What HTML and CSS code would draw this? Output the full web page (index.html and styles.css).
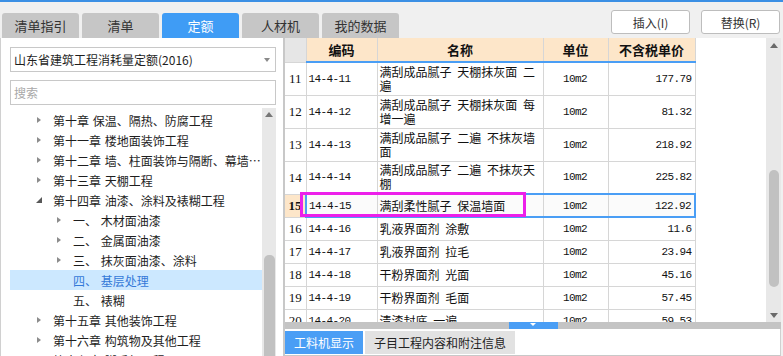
FILE: index.html
```html
<!DOCTYPE html>
<html lang="zh-CN">
<head>
    <meta charset="UTF-8">
    <meta name="viewport" content="width=device-width, initial-scale=1.0">
    <title>定额</title>
    <link rel="stylesheet" href="styles.css">
</head>
<body>
    <div class="topline"></div>

    <div class="toolbar">
        <div class="tabs">
            <a class="tab">清单指引</a>
            <a class="tab">清单</a>
            <a class="tab active">定额</a>
            <a class="tab">人材机</a>
            <a class="tab">我的数据</a>
        </div>
        <div class="actions">
            <button class="btn">插入(I)</button>
            <button class="btn">替换(R)</button>
        </div>
    </div>

    <div class="main">
        <div class="left">
            <div class="select">
                <span>山东省建筑工程消耗量定额(2016)</span>
                <span class="caret"></span>
            </div>
            <input class="search" type="text" placeholder="搜索">

            <div class="tree-wrap">
                <ul class="tree">
                    <li class="node"><span class="arrow"></span><span class="label">第十章 保温、隔热、防腐工程</span></li>
                    <li class="node"><span class="arrow"></span><span class="label">第十一章 楼地面装饰工程</span></li>
                    <li class="node"><span class="arrow"></span><span class="label">第十二章 墙、柱面装饰与隔断、幕墙工程</span></li>
                    <li class="node"><span class="arrow"></span><span class="label">第十三章 天棚工程</span></li>
                    <li class="node open"><span class="arrow"></span><span class="label">第十四章 油漆、涂料及裱糊工程</span></li>
                    <li class="node sub"><span class="arrow"></span><span class="label">一、 木材面油漆</span></li>
                    <li class="node sub"><span class="arrow"></span><span class="label">二、 金属面油漆</span></li>
                    <li class="node sub"><span class="arrow"></span><span class="label">三、 抹灰面油漆、涂料</span></li>
                    <li class="node sub leaf on"><span class="arrow"></span><span class="label">四、 基层处理</span></li>
                    <li class="node sub leaf"><span class="arrow"></span><span class="label">五、 裱糊</span></li>
                    <li class="node"><span class="arrow"></span><span class="label">第十五章 其他装饰工程</span></li>
                    <li class="node"><span class="arrow"></span><span class="label">第十六章 构筑物及其他工程</span></li>
                    <li class="node"><span class="arrow"></span><span class="label">第十七章 脚手架工程</span></li>
                </ul>
                <div class="tree-scroll">
                    <span class="up"></span>
                    <span class="thumb"></span>
                </div>
            </div>
        </div>

        <div class="right">
            <div class="grid">
                <div class="grid-body">
                    <table class="quota">
                        <colgroup>
                            <col class="c-num">
                            <col class="c-code">
                            <col class="c-name">
                            <col class="c-unit">
                            <col class="c-price">
                        </colgroup>
                        <thead>
                            <tr>
                                <th class="gut"></th>
                                <th>编码</th>
                                <th>名称</th>
                                <th>单位</th>
                                <th>不含税单价</th>
                            </tr>
                        </thead>
                        <tbody>
                            <tr class="two">
                                <td class="num">11</td><td class="code">14-4-11</td>
                                <td class="name">满刮成品腻子 天棚抹灰面 二遍</td>
                                <td class="unit">10m2</td><td class="price">177.79</td>
                            </tr>
                            <tr class="two">
                                <td class="num">12</td><td class="code">14-4-12</td>
                                <td class="name">满刮成品腻子 天棚抹灰面 每增一遍</td>
                                <td class="unit">10m2</td><td class="price">81.32</td>
                            </tr>
                            <tr class="two">
                                <td class="num">13</td><td class="code">14-4-13</td>
                                <td class="name">满刮成品腻子 二遍 不抹灰墙面</td>
                                <td class="unit">10m2</td><td class="price">218.92</td>
                            </tr>
                            <tr class="two">
                                <td class="num">14</td><td class="code">14-4-14</td>
                                <td class="name">满刮成品腻子 二遍 不抹灰天棚</td>
                                <td class="unit">10m2</td><td class="price">225.82</td>
                            </tr>
                            <tr class="one cur">
                                <td class="num">15</td><td class="code">14-4-15</td>
                                <td class="name">满刮柔性腻子 保温墙面</td>
                                <td class="unit">10m2</td><td class="price">122.92</td>
                            </tr>
                            <tr class="one">
                                <td class="num">16</td><td class="code">14-4-16</td>
                                <td class="name">乳液界面剂 涂敷</td>
                                <td class="unit">10m2</td><td class="price">11.6</td>
                            </tr>
                            <tr class="one">
                                <td class="num">17</td><td class="code">14-4-17</td>
                                <td class="name">乳液界面剂 拉毛</td>
                                <td class="unit">10m2</td><td class="price">23.94</td>
                            </tr>
                            <tr class="one">
                                <td class="num">18</td><td class="code">14-4-18</td>
                                <td class="name">干粉界面剂 光面</td>
                                <td class="unit">10m2</td><td class="price">45.16</td>
                            </tr>
                            <tr class="one">
                                <td class="num">19</td><td class="code">14-4-19</td>
                                <td class="name">干粉界面剂 毛面</td>
                                <td class="unit">10m2</td><td class="price">57.45</td>
                            </tr>
                            <tr class="one">
                                <td class="num">20</td><td class="code">14-4-20</td>
                                <td class="name">清漆封底 一遍</td>
                                <td class="unit">10m2</td><td class="price">59.53</td>
                            </tr>
                        </tbody>
                    </table>
                    <div class="mark"></div>
                </div>
                <div class="vscroll">
                    <span class="up"></span>
                    <span class="thumb"></span>
                    <span class="down"></span>
                </div>
            </div>

            <div class="splitter"><span class="handle"></span></div>

            <div class="pane">
                <a class="ptab active">工料机显示</a>
                <a class="ptab">子目工程内容和附注信息</a>
            </div>
        </div>
    </div>
</body>
</html>
```

FILE: styles.css
```css
* {
    box-sizing: border-box;
}
body {
    margin: 0;
    width: 783px;
    height: 356px;
    overflow: hidden;
    background: #f0f0f0;
    font-family: "Noto Sans CJK SC", "Microsoft YaHei", sans-serif;
    font-size: 12px;
    color: #1e1e1e;
}
.topline {
    height: 2px;
    background: #3b8fe4;
}
.toolbar {
    display: flex;
    justify-content: space-between;
    height: 36px;
}
.tabs {
    display: flex;
    align-items: flex-end;
    gap: 3px;
    padding-left: 2px;
}
.tab {
    width: 77px;
    height: 25px;
    line-height: 25px;
    text-align: center;
    background: #c6c6c6;
    border-radius: 3px 3px 0 0;
    color: #333;
    font-size: 13px;
}
.tab.active {
    background: #3f9cf5;
    color: #fff;
}
.actions {
    display: flex;
    gap: 11px;
    padding: 8px 3px 0 0;
}
.btn {
    width: 79px;
    height: 24px;
    border: 1px solid #bdbdbd;
    border-radius: 3px;
    background: #fff;
    font-family: "Noto Sans CJK SC", sans-serif;
    font-size: 12px;
    color: #333;
    padding: 0;
}

.main {
    display: flex;
    height: 318px;
}

/* left: quota tree */
.left {
    width: 283px;
    flex: none;
    background: #fff;
    border-left: 1px solid #d0d0d0;
    padding: 9px 7px 0 9px;
    display: flex;
    flex-direction: column;
}
.select {
    height: 25px;
    border: 1px solid #c8c8c8;
    display: flex;
    align-items: center;
    justify-content: space-between;
    padding: 0 5px 0 3px;
    color: #1e1e1e;
}
.caret {
    width: 0;
    height: 0;
    border-left: 3.5px solid transparent;
    border-right: 3.5px solid transparent;
    border-top: 4px solid #8a8a8a;
}
.search {
    margin: 8px 0 0;
    height: 25px;
    border: 1px solid #c8c8c8;
    padding: 0 3px;
    font-family: "Noto Sans CJK SC", sans-serif;
    font-size: 12px;
    outline: none;
}
.search::placeholder {
    color: #a8a8a8;
}
.tree-wrap {
    margin-top: 3px;
    flex: 1;
    display: flex;
    min-height: 0;
}
.tree {
    flex: 1;
    min-width: 0;
    list-style: none;
    margin: 0;
    padding: 2px 0 0;
}
.node {
    height: 20px;
    display: flex;
    align-items: center;
    padding-left: 27px;
    white-space: nowrap;
}
.node.sub {
    padding-left: 47px;
}
.arrow {
    width: 16px;
    flex: none;
    display: flex;
    align-items: center;
}
.arrow::before {
    content: "";
    width: 0;
    height: 0;
    border-top: 3.5px solid transparent;
    border-bottom: 3.5px solid transparent;
    border-left: 4px solid #8c8c8c;
}
.node.open .arrow::before {
    border-top: none;
    border-left: 6px solid transparent;
    border-bottom: 6px solid #585858;
    margin-left: -1px;
}
.node.leaf .arrow::before {
    display: none;
}
.label {
    overflow: hidden;
    text-overflow: ellipsis;
    word-spacing: 1px;
}
.node.on {
    background: #cce8ff;
    color: #3479d8;
}
.tree-scroll {
    width: 14px;
    flex: none;
    background: #e8e8e8;
    display: flex;
    flex-direction: column;
    align-items: center;
    padding-top: 4px;
}
.tree-scroll .up {
    width: 0;
    height: 0;
    border-left: 4px solid transparent;
    border-right: 4px solid transparent;
    border-bottom: 5px solid #777;
}
.tree-scroll .thumb {
    margin-top: 138px;
    width: 11px;
    flex: 1;
    background: #c1c1c1;
    border-radius: 5px 5px 0 0;
}

/* right: quota grid */
.right {
    flex: 1;
    min-width: 0;
    display: flex;
    flex-direction: column;
    border-left: 2px solid #c8c8c8;
    margin-right: 2px;
}
.grid {
    height: 284px;
    flex: none;
    display: flex;
    background: #fff;
}
.grid-body {
    flex: 1;
    position: relative;
    overflow: hidden;
}
.quota {
    border-collapse: collapse;
    table-layout: fixed;
    width: 410px;
}
.c-num { width: 21px; }
.c-code { width: 71px; }
.c-name { width: 166px; }
.c-unit { width: 65px; }
.c-price { width: 87px; }
.quota th {
    height: 24px;
    padding: 0;
    background: #fde6c9;
    font-size: 13px;
    font-weight: bold;
    color: #111;
    border: 1px solid #d6d6d6;
    border-top: none;
    border-bottom: 2px solid #4a9ef5;
}
.quota th.gut {
    background: #e6e6e6;
    border-left: none;
    border-bottom: 1px solid #d6d6d6;
}
.quota td {
    border: 1px solid #d6d6d6;
    padding: 0 3px 0 2px;
    line-height: 14px;
    vertical-align: middle;
    color: #111;
}
.quota tr.two td {
    height: 33px;
}
.quota tr.one td {
    height: 23px;
}
.quota td.num {
    border-left: none;
    padding: 0;
    text-align: center;
    font-family: "Liberation Serif", serif;
    font-size: 13px;
}
.quota td.code,
.quota td.unit,
.quota td.price {
    font-family: "Liberation Mono", monospace;
    font-size: 11px;
    letter-spacing: -0.6px;
}
.quota td.name {
    word-spacing: 3px;
}
.quota td.unit {
    text-align: center;
}
.quota td.price {
    text-align: right;
    padding-right: 3px;
}
.quota tr.cur td {
    background: #fbfbfb;
    border-top: 2px solid #4a9ef5;
    border-bottom: 2px solid #4a9ef5;
}
.quota tr.cur td.num {
    background: #fde6c9;
    font-weight: bold;
    border-top: 1px solid #d6d6d6;
    border-bottom: 1px solid #d6d6d6;
}
.quota tr.cur td.code {
    border-left: 2px solid #4a9ef5;
}
.quota tr.cur td.price {
    border-right: 2px solid #4a9ef5;
}
.mark {
    position: absolute;
    left: 15px;
    top: 154px;
    width: 226px;
    height: 25px;
    border: 3px solid #ec1fea;
}
.vscroll {
    width: 15px;
    flex: none;
    background: #e8e8e8;
    display: flex;
    flex-direction: column;
    align-items: center;
    padding: 5px 0 4px;
}
.vscroll .up,
.vscroll .down {
    width: 0;
    height: 0;
    border-left: 4px solid transparent;
    border-right: 4px solid transparent;
}
.vscroll .up {
    border-bottom: 5px solid #6a6a6a;
}
.vscroll .down {
    margin-top: auto;
    border-top: 5px solid #6a6a6a;
}
.vscroll .thumb {
    margin-top: 122px;
    width: 10px;
    height: 117px;
    background: #c1c1c1;
    border-radius: 5px;
}
.splitter {
    height: 7px;
    flex: none;
    background: #c4c4c4;
    display: flex;
    justify-content: center;
}
.handle {
    width: 49px;
    background: #4a9ef5;
    display: flex;
    justify-content: center;
    padding-top: 1px;
}
.handle::before {
    content: "";
    width: 0;
    height: 0;
    border-left: 3px solid transparent;
    border-right: 3px solid transparent;
    border-top: 3px solid #fff;
}
.pane {
    flex: 1;
    background: #fff;
    border-right: 1px solid #d0d0d0;
    border-bottom: 1px solid #c8c8c8;
    padding-top: 2px;
    display: flex;
    align-items: flex-start;
    gap: 2px;
}
.ptab {
    height: 23px;
    line-height: 23px;
    padding: 0 9px;
    background: #e2e2e2;
    color: #222;
}
.ptab.active {
    width: 78px;
    background: #4a9ef5;
    color: #fff;
    text-align: center;
}
```
